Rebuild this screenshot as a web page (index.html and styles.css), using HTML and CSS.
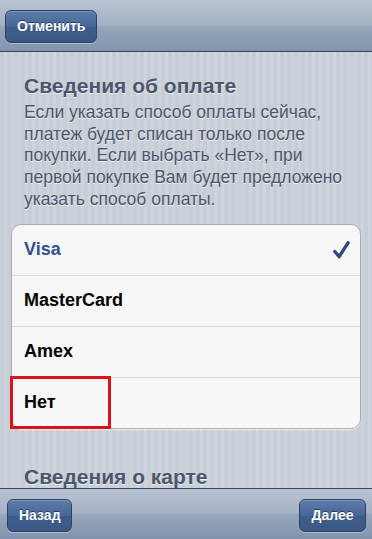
FILE: index.html
```html
<!DOCTYPE html>
<html lang="ru">
<head>
<meta charset="utf-8">
<title>Сведения об оплате</title>
<link rel="stylesheet" href="styles.css">
</head>
<body>
<div class="screen">
  <header class="bar bar-top">
    <button class="btn">Отменить</button>
  </header>
  <main class="content">
    <h2 class="section-title">Сведения об оплате</h2>
    <p class="section-text">Если указать способ оплаты сейчас, платеж будет списан только после покупки. Если выбрать «Нет», при первой покупке Вам будет предложено указать способ оплаты.</p>
    <ul class="group">
      <li class="row row-selected">Visa
        <svg class="check" width="17" height="18" viewBox="0 0 17 18"><path d="M1.8 10.5 L6.2 15.6 L15 1.8" fill="none" stroke="#2f4a7d" stroke-width="3.4" stroke-linecap="round" stroke-linejoin="round"/></svg>
      </li>
      <li class="row">MasterCard</li>
      <li class="row">Amex</li>
      <li class="row row-last">Нет<span class="highlight"></span></li>
    </ul>
    <h2 class="section-title section-title-2">Сведения о карте</h2>
  </main>
  <footer class="bar bar-bottom">
    <button class="btn">Назад</button>
    <button class="btn">Далее</button>
  </footer>
</div>
</body>
</html>
```
FILE: styles.css
```css
* { box-sizing: border-box; }
html, body { margin: 0; padding: 0; }
body {
  font-family: "Liberation Sans", Arial, sans-serif;
  width: 372px;
  height: 539px;
  overflow: hidden;
}
.screen {
  display: flex;
  flex-direction: column;
  height: 539px;
  background: repeating-linear-gradient(90deg, #c7ced6 0 4px, #ced4db 4px 7px);
}
.bar {
  flex: 0 0 auto;
  height: 52px;
  display: flex;
  align-items: center;
  background: linear-gradient(#b9c4d2, #a3b1c3 50%, #96a6bb 51%, #8294ad);
}
.bar-top {
  border-bottom: 1px solid #3b4656;
  padding: 1px 0 0 5px;
}
.bar-bottom {
  border-top: 1px solid #3b4656;
  justify-content: space-between;
  padding: 2px 6px 0 7px;
  height: 51px;
}
.btn {
  height: 33px;
  padding: 0 11px;
  border: 1px solid #2d4163;
  border-radius: 6px;
  background: linear-gradient(#5d7ca7, #47679a 50%, #3e5d8c 51%, #3b5885);
  box-shadow: 0 1px 0 rgba(255,255,255,0.35), inset 0 1px 0 rgba(255,255,255,0.2);
  color: #fff;
  font-family: "Liberation Sans", Arial, sans-serif;
  font-weight: bold;
  font-size: 14px;
  text-shadow: 0 -1px 0 rgba(0,0,0,0.45);
}
.bar-top .btn { width: 92px; }
.bar-bottom .btn:first-child { width: 65px; }
.bar-bottom .btn:last-child { width: 67px; }
.content {
  flex: 1 1 auto;
  overflow: hidden;
  padding: 22px 11px 0 11px;
}
.section-title {
  margin: 0 13px;
  font-size: 21px;
  line-height: 23px;
  font-weight: bold;
  color: #4c566c;
  text-shadow: 0 1px 0 rgba(255,255,255,0.7);
}
.section-text {
  margin: 5px 9px 0 13px;
  font-size: 17.5px;
  line-height: 21.7px;
  color: #4c566c;
  text-shadow: 0 1px 0 rgba(255,255,255,0.7);
}
.group {
  list-style: none;
  margin: 13px 0 0 0;
  padding: 0;
  background: #f7f7f7;
  border: 1px solid #a9adb3;
  border-radius: 10px;
  box-shadow: 0 1px 0 rgba(255,255,255,0.6);
}
.row {
  position: relative;
  height: 51px;
  display: flex;
  align-items: center;
  justify-content: space-between;
  padding: 0 10px 0 12px;
  border-bottom: 1px solid #dadada;
  font-size: 18px;
  font-weight: bold;
  color: #000;
}
.row-last { border-bottom: none; height: 50px; }
.row-selected { color: #34508a; }
.check { display: block; }
.highlight {
  position: absolute;
  left: -2px;
  top: -2px;
  width: 101px;
  height: 53px;
  border: 3px solid #d9121c;
}
.section-title-2 { margin-top: 36px; }
```
